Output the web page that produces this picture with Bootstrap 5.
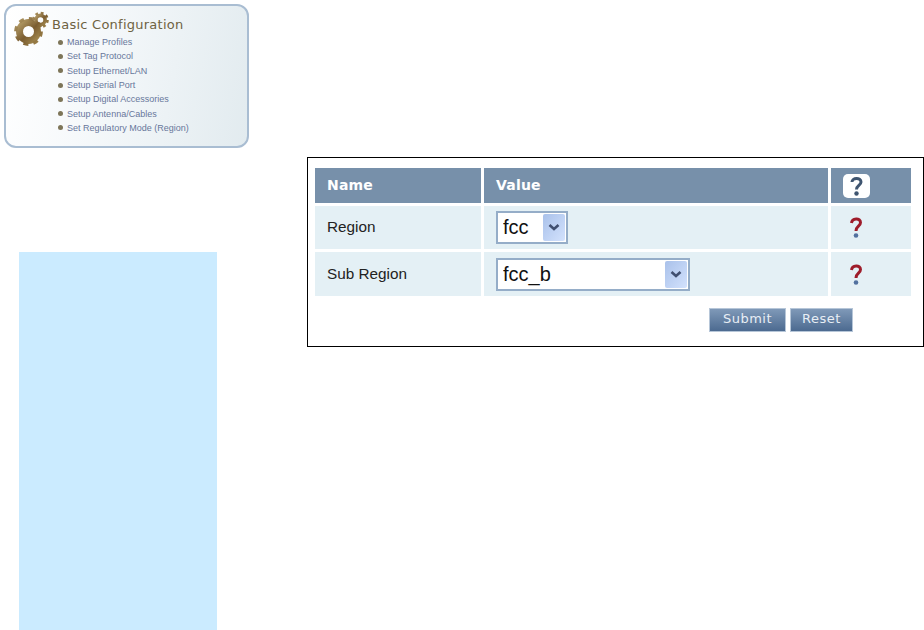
<!DOCTYPE html>
<html lang="en">
<head>
<meta charset="utf-8">
<title>Basic Configuration</title>
<link rel="stylesheet" href="https://cdn.jsdelivr.net/npm/bootstrap@5.3.0/dist/css/bootstrap.min.css">
<style>
html,body{background:#fff;height:630px;overflow:hidden}
body{font-family:"Liberation Sans",Arial,sans-serif}
.side{width:307px;flex:none}
.panel-box{margin:4px 0 0 4px;width:245px;height:144px;border:2px solid #a9bdd2;border-radius:12px;background:linear-gradient(100deg,#fff 0,#f6f9fb 35%,#e2ebef 100%);padding:6px 0 0 8px}
.panel-head{gap:3px;height:23px}
.gear-icon{flex:none;align-self:flex-start;overflow:visible}
.panel-title{font-family:"DejaVu Sans",sans-serif;font-size:13px;color:#6e6242;letter-spacing:.25px;line-height:1;margin-top:2px}
.menu-list{margin:0 0 0 44px;padding:0;list-style:none}
.menu-list li{height:14.3px;line-height:14px;font-size:9px;letter-spacing:.01px;color:#68779b;display:flex;align-items:center;gap:4px}
.menu-list li::before{content:"";width:5px;height:5px;border-radius:50%;background:#7d7558;flex:none}
.blue-box{margin:104px 0 0 19px;width:198px;height:378px;background:#cbebff}
.form-frame{margin-top:157px;width:617px;height:190px;border:1px solid #000;padding:7px 0 0 4px}
.cfg-table{border-collapse:separate;border-spacing:3px;width:602px;table-layout:fixed}
.col-name{width:166px}
.col-value{width:344px}
.col-help{width:80px}
.cfg-table th{background:#7790aa;color:#fff;height:35px;font-family:"DejaVu Sans",sans-serif;font-size:14px;font-weight:700;padding:0 0 0 12px;letter-spacing:.2px}
.cfg-table td{background:#e4f0f5;height:43px;padding:0 0 0 12px;font-size:15.3px;color:#222;vertical-align:middle}
.cfg-table tr.short-row td{height:44px}
.cfg-table svg{display:block}
.cfg-table .help-cell{padding-left:19px}
.cfg-select.form-select{display:block;height:33px;padding:0 0 0 5px;border:2px solid #95adc8;border-radius:0;font-family:"Liberation Sans",sans-serif;font-size:20px;color:#111;line-height:29px;background-color:#fff;background-image:url("data:image/svg+xml,%3Csvg xmlns='http://www.w3.org/2000/svg' width='22' height='27'%3E%3Cdefs%3E%3ClinearGradient id='g' x1='0' y1='0' x2='1' y2='1'%3E%3Cstop offset='0' stop-color='%23a9c1ea'/%3E%3Cstop offset='1' stop-color='%23d3e2fd'/%3E%3C/linearGradient%3E%3C/defs%3E%3Crect width='22' height='27' rx='2' fill='url(%23g)'/%3E%3Cpath d='M6.5 11l4.5 4 4.5-4' fill='none' stroke='%23404f70' stroke-width='2.6'/%3E%3C/svg%3E");background-repeat:no-repeat;background-position:right 1px center;background-size:22px 27px;box-shadow:none}
.sel-a{width:72px}
.sel-b{width:194px}
.btn-row{margin:9px 0 0 0;gap:4px;padding-left:397px}
.cfg-btn.btn{height:24px;padding:0 0 2px;border:1px solid #b6c6d8;border-radius:0;background:linear-gradient(#7f99b8,#4c6a90);color:#e8eef5;font-family:"DejaVu Sans",sans-serif;font-size:13px;letter-spacing:.5px;line-height:20px}
.btn-s{width:77px}
.btn-r{width:63px}
</style>
</head>
<body class="m-0">
<div class="d-flex align-items-start">
  <div class="side">
    <div class="panel-box">
      <div class="d-flex panel-head align-items-center">
        <svg class="gear-icon" width="35" height="34" viewBox="0 0 35 34" aria-hidden="true">
          <defs><linearGradient id="gold" x1="0" y1="0" x2="1" y2="1"><stop offset="0" stop-color="#b39b66"/><stop offset=".55" stop-color="#7a5c30"/><stop offset="1" stop-color="#a3894f"/></linearGradient></defs>
          <g fill="none" stroke="url(#gold)">
            <circle cx="14.5" cy="19.5" r="9" stroke-width="7"/>
            <circle cx="14.5" cy="19.5" r="12.800" stroke-width="3.200" stroke-dasharray="5 5.050"/>
            <circle cx="26.5" cy="8" r="4.600" stroke-width="3.600"/>
            <circle cx="26.5" cy="8" r="7" stroke-width="2.600" stroke-dasharray="2.800 2.700"/>
          </g>
        </svg>
        <span class="panel-title">Basic Configuration</span>
      </div>
      <ul class="menu-list">
        <li>Manage Profiles</li>
        <li>Set Tag Protocol</li>
        <li>Setup Ethernet/LAN</li>
        <li>Setup Serial Port</li>
        <li>Setup Digital Accessories</li>
        <li>Setup Antenna/Cables</li>
        <li>Set Regulatory Mode (Region)</li>
      </ul>
    </div>
    <div class="blue-box"></div>
  </div>
  <div class="form-frame">
    <table class="cfg-table">
      <colgroup><col class="col-name"><col class="col-value"><col class="col-help"></colgroup>
      <thead>
        <tr>
          <th>Name</th>
          <th>Value</th>
          <th>
            <svg width="27" height="24" viewBox="0 0 27 24" aria-hidden="true"><rect width="27" height="24" rx="5" fill="#fff"/><path d="M9 8C9 3.500 18 3 18 8C18 11.500 13.500 11.500 13.500 15.500" fill="none" stroke="#3f5570" stroke-width="3"/><circle cx="13.500" cy="19.500" r="2.200" fill="#3f5570"/></svg>
          </th>
        </tr>
      </thead>
      <tbody>
        <tr>
          <td>Region</td>
          <td><select class="form-select cfg-select sel-a" aria-label="Region"><option>fcc</option></select></td>
          <td class="help-cell">
            <svg width="12" height="21" viewBox="0 0 12 21" aria-hidden="true"><path d="M1.500 6C2 0.800 10.500 0.500 10.500 5.500C10.500 9.500 6 9 6 14" fill="none" stroke="#9e1c2a" stroke-width="3"/><circle cx="6" cy="18.500" r="2.300" fill="#52719f"/></svg>
          </td>
        </tr>
        <tr class="short-row">
          <td>Sub Region</td>
          <td><select class="form-select cfg-select sel-b" aria-label="Sub Region"><option>fcc_b</option></select></td>
          <td class="help-cell">
            <svg width="12" height="21" viewBox="0 0 12 21" aria-hidden="true"><path d="M1.500 6C2 0.800 10.500 0.500 10.500 5.500C10.500 9.500 6 9 6 14" fill="none" stroke="#9e1c2a" stroke-width="3"/><circle cx="6" cy="18.500" r="2.300" fill="#52719f"/></svg>
          </td>
        </tr>
      </tbody>
    </table>
    <div class="d-flex btn-row">
      <button type="button" class="btn cfg-btn btn-s">Submit</button>
      <button type="button" class="btn cfg-btn btn-r">Reset</button>
    </div>
  </div>
</div>
</body>
</html>
